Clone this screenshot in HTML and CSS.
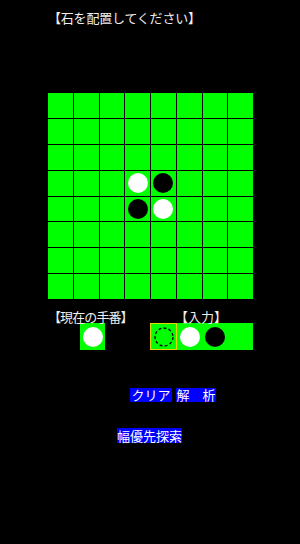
FILE: index.html
```html
<!DOCTYPE html>
<html lang="ja">
<head>
<meta charset="utf-8">
<title>Othello</title>
<link rel="stylesheet" href="styles.css">
</head>
<body>
<div class="title">【石を配置してください】</div>
<div class="board">
  <div class="cell"></div><div class="cell"></div><div class="cell"></div><div class="cell"></div><div class="cell"></div><div class="cell"></div><div class="cell"></div><div class="cell"></div>
  <div class="cell"></div><div class="cell"></div><div class="cell"></div><div class="cell"></div><div class="cell"></div><div class="cell"></div><div class="cell"></div><div class="cell"></div>
  <div class="cell"></div><div class="cell"></div><div class="cell"></div><div class="cell"></div><div class="cell"></div><div class="cell"></div><div class="cell"></div><div class="cell"></div>
  <div class="cell"></div><div class="cell"></div><div class="cell"></div><div class="cell"><span class="stone white"></span></div><div class="cell"><span class="stone black"></span></div><div class="cell"></div><div class="cell"></div><div class="cell"></div>
  <div class="cell"></div><div class="cell"></div><div class="cell"></div><div class="cell"><span class="stone black"></span></div><div class="cell"><span class="stone white"></span></div><div class="cell"></div><div class="cell"></div><div class="cell"></div>
  <div class="cell"></div><div class="cell"></div><div class="cell"></div><div class="cell"></div><div class="cell"></div><div class="cell"></div><div class="cell"></div><div class="cell"></div>
  <div class="cell"></div><div class="cell"></div><div class="cell"></div><div class="cell"></div><div class="cell"></div><div class="cell"></div><div class="cell"></div><div class="cell"></div>
  <div class="cell"></div><div class="cell"></div><div class="cell"></div><div class="cell"></div><div class="cell"></div><div class="cell"></div><div class="cell"></div><div class="cell"></div>
</div>
<div class="status">
  <div class="col-turn">
    <div class="label label-turn">【現在の手番】</div>
    <div class="turn-box"><span class="stone white"></span></div>
  </div>
  <div class="col-input">
    <div class="label label-input">【入力】</div>
    <div class="palette">
      <div class="pcell selected">
        <svg width="20" height="20" viewBox="0 0 20 20"><circle cx="10" cy="10" r="9" fill="none" stroke="#000" stroke-width="1.3" stroke-dasharray="3 2.2"/></svg>
      </div>
      <div class="pcell"><span class="stone white"></span></div>
      <div class="pcell"><span class="stone black"></span></div>
      <div class="pcell"></div>
    </div>
  </div>
</div>
<div class="buttons">
  <span class="btn">クリア</span>
  <span class="btn btn-narrow">解　析</span>
</div>
<div class="buttons2">
  <span class="btn btn-wide">幅優先探索</span>
</div>
</body>
</html>
```
FILE: styles.css
```css
html, body {
  margin: 0;
  padding: 0;
  background: #000;
}
body {
  font-family: "Noto Sans CJK JP", "Noto Sans", sans-serif;
  font-size: 13px;
  color: #eeeeee;
  width: 300px;
  height: 544px;
  overflow: hidden;
}
.title {
  margin: 11px 0 0 48px;
  line-height: 14px;
  white-space: nowrap;
  letter-spacing: -0.2px;
}
.board {
  margin: 68px 0 0 48px;
  width: 205px;
  height: 206px;
  display: grid;
  grid-template-columns: repeat(8, 1fr);
  grid-template-rows: repeat(8, 1fr);
  gap: 1px;
  background: #000;
}
.cell {
  background: #00ff00;
  display: flex;
  align-items: center;
  justify-content: center;
}
.stone {
  display: block;
  width: 20px;
  height: 20px;
  border-radius: 50%;
}
.stone.white { background: #ffffff; }
.stone.black { background: #000000; }
.status {
  display: flex;
  margin: 11px 0 0 48px;
}
.col-turn {
  width: 102px;
}
.label {
  line-height: 14px;
  white-space: nowrap;
}
.label-turn {
  letter-spacing: -0.9px;
}
.label-input {
  margin-left: 25px;
}
.turn-box {
  margin: -1px 0 0 32px;
  width: 25px;
  height: 27px;
  background: #00ff00;
  display: flex;
  align-items: center;
  justify-content: center;
}
.palette {
  margin-top: -1px;
  width: 103px;
  height: 27px;
  background: #00ff00;
  display: grid;
  grid-template-columns: 27px 25px 26px 25px;
}
.pcell {
  display: flex;
  align-items: center;
  justify-content: center;
}
.pcell.selected {
  border: 1px solid #e8d800;
  box-sizing: border-box;
}
.pcell svg { display: block; }
.buttons {
  margin: 38px 0 0 130px;
  display: flex;
  gap: 4px;
}
.btn {
  display: inline-block;
  background: #0000ff;
  color: #ffffff;
  line-height: 14px;
  padding: 0 1.5px;
  white-space: nowrap;
}
.btn-narrow { padding: 0 0.5px; }
.buttons2 {
  margin: 26px 0 0 117px;
  display: flex;
}
.btn-wide {
  line-height: 15px;
  padding: 0;
}
```
